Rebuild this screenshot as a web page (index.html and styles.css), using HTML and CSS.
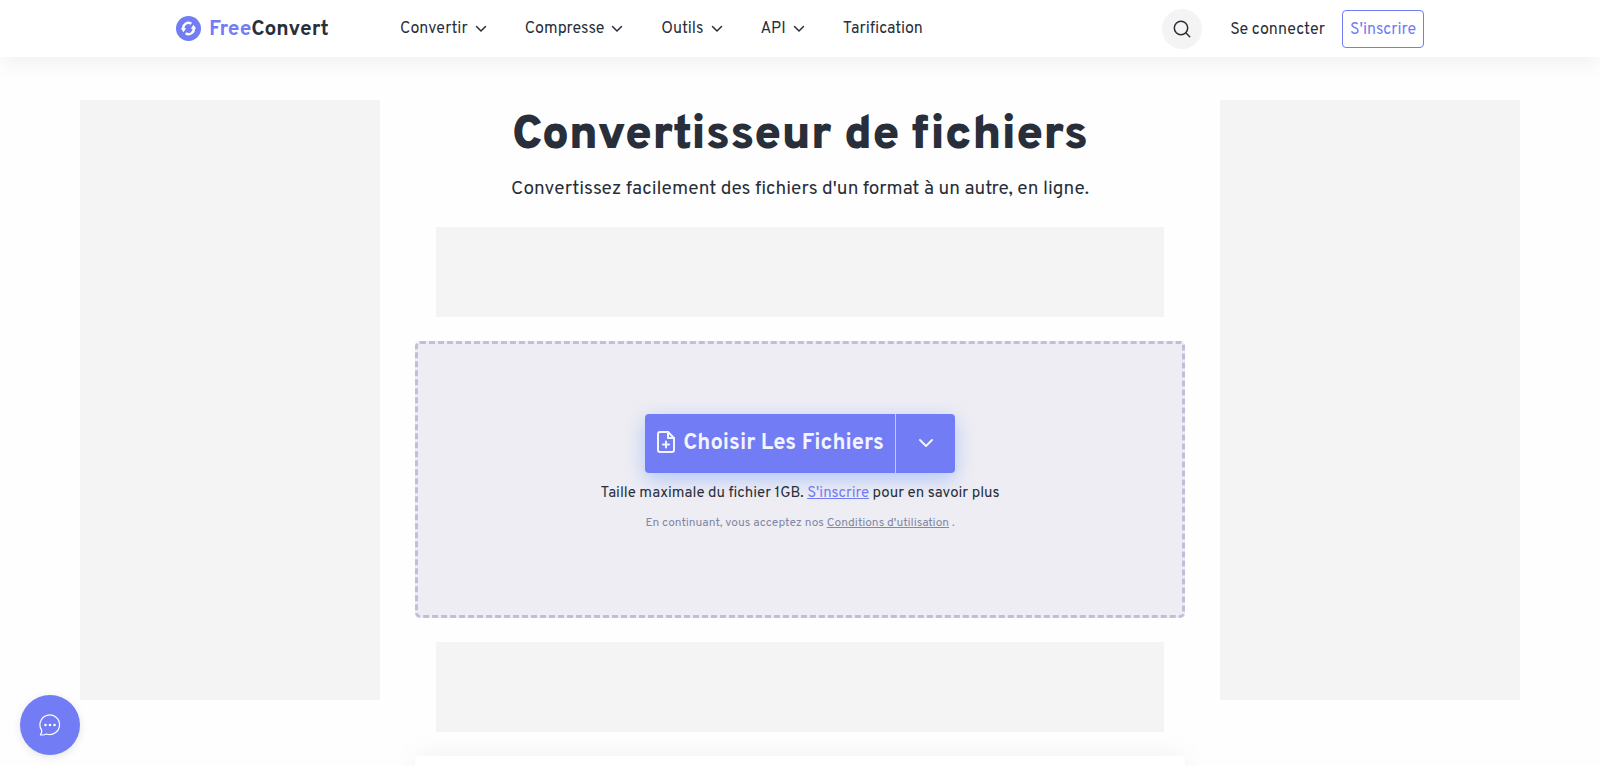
FILE: index.html
```html
<!DOCTYPE html>
<html lang="fr">
<head>
    <meta charset="UTF-8">
    <meta name="viewport" content="width=device-width, initial-scale=1.0">
    <title>FreeConvert - Convertisseur de fichiers</title>
    <link rel="stylesheet" href="styles.css">
</head>
<body>
    <header class="header">
        <div class="header-inner">
            <a href="#" class="logo">
                <svg class="logo-icon" viewBox="0 0 25 25">
                    <circle cx="12.5" cy="12.5" r="12.5" fill="#727cf5"/>
                    <g fill="none" stroke="#fff" stroke-width="2.400" stroke-linecap="butt">
                        <path d="M7.500 13.500A5.100 5.100 0 0 1 15.300 7.800"/>
                        <path d="M17.500 11.500A5.100 5.100 0 0 1 9.700 17.200"/>
                    </g>
                    <path d="M4.800 12.200H10.200L7.500 16.200zM20.200 12.800H14.800L17.500 8.800z" fill="#fff"/>
                </svg>
                <span class="logo-text"><span class="logo-free">Free</span>Convert</span>
            </a>

            <nav class="nav">
                <button class="nav-item">Convertir <svg class="chevron" viewBox="0 0 12 12"><path d="M1.500 3.500L6 8l4.500-4.500"/></svg></button>
                <button class="nav-item">Compresse <svg class="chevron" viewBox="0 0 12 12"><path d="M1.500 3.500L6 8l4.500-4.500"/></svg></button>
                <button class="nav-item">Outils <svg class="chevron" viewBox="0 0 12 12"><path d="M1.500 3.500L6 8l4.500-4.500"/></svg></button>
                <button class="nav-item">API <svg class="chevron" viewBox="0 0 12 12"><path d="M1.500 3.500L6 8l4.500-4.500"/></svg></button>
                <a href="#" class="nav-item">Tarification</a>
            </nav>

            <div class="account">
                <button class="search-btn" aria-label="Rechercher">
                    <svg viewBox="0 0 18 18"><circle cx="8" cy="8" r="6.700"/><path d="M12.800 12.800L16.700 16.700"/></svg>
                </button>
                <a href="#" class="login">Se connecter</a>
                <a href="#" class="signup">S'inscrire</a>
            </div>
        </div>
    </header>

    <main class="page">
        <aside class="ad-side"></aside>

        <section class="content">
            <h1>Convertisseur de fichiers</h1>
            <p class="subtitle">Convertissez facilement des fichiers d'un format à un autre, en ligne.</p>

            <div class="ad-banner"></div>

            <div class="dropzone">
                <div class="choose">
                    <button class="choose-btn">
                        <svg class="file-icon" viewBox="0 0 20 24">
                            <path d="M12 2H4a2 2 0 0 0-2 2v16a2 2 0 0 0 2 2h12a2 2 0 0 0 2-2V8z"/>
                            <path d="M12 2v6h6M10 11.500v6M7 14.500h6"/>
                        </svg>
                        <span class="choose-label">Choisir Les Fichiers</span>
                    </button>
                    <button class="choose-more" aria-label="Autres sources">
                        <svg viewBox="0 0 16 10"><path d="M2 2l6 6 6-6"/></svg>
                    </button>
                </div>
                <p class="max-size">Taille maximale du fichier 1GB. <a href="#">S'inscrire</a> pour en savoir plus</p>
                <p class="terms">En continuant, vous acceptez nos <a href="#">Conditions d'utilisation</a> .</p>
            </div>

            <div class="ad-banner"></div>

            <div class="card"></div>
        </section>

        <aside class="ad-side"></aside>
    </main>

    <button class="chat-btn" aria-label="Chat">
        <svg viewBox="0 0 22 22">
            <path d="M1.300 20.800C2.800 19 3 17.600 2.600 16.200A9.800 9.800 0 1 1 7.500 20C5.800 20.800 3.500 21.200 1.300 20.800z"/>
            <g class="dots"><circle cx="6.500" cy="11" r="1.300"/><circle cx="11" cy="11" r="1.300"/><circle cx="15.500" cy="11" r="1.300"/></g>
        </svg>
    </button>
</body>
</html>
```

FILE: styles.css
```css
* {
    margin: 0;
    padding: 0;
    box-sizing: border-box;
}

body {
    height: 100vh;
    overflow: hidden;
    font-family: Overpass, Roboto, sans-serif;
    font-size: 16px;
    line-height: 24px;
    color: #282f3b;
    background: #fefefe;
}

button {
    font: inherit;
    color: inherit;
    background: none;
    border: none;
    cursor: pointer;
}

a {
    color: inherit;
    text-decoration: none;
}

svg {
    fill: none;
    stroke: currentColor;
    stroke-linecap: round;
    stroke-linejoin: round;
}

/* Header */
.header {
    position: relative;
    background: #fff;
    box-shadow: 0 10px 20px -2px rgba(0, 0, 0, 0.05);
}

.header-inner {
    display: flex;
    align-items: center;
    max-width: 1248px;
    height: 57px;
    margin: 0 auto;
}

.logo {
    display: flex;
    align-items: center;
    gap: 8px;
    width: 224px;
}

.logo-icon {
    width: 25px;
    height: 25px;
    stroke: none;
}

.logo-text {
    padding-top: 2px;
    font-size: 21px;
    font-weight: 700;
}

.logo-free {
    color: #727cf5;
}

.nav {
    display: flex;
    gap: 38px;
}

.nav-item {
    display: flex;
    align-items: center;
    gap: 7px;
}

.chevron {
    width: 12px;
    height: 12px;
    stroke-width: 1.5;
}

.account {
    display: flex;
    align-items: center;
    margin-left: auto;
}

.search-btn {
    display: flex;
    align-items: center;
    justify-content: center;
    width: 40px;
    height: 40px;
    margin-right: 28px;
    border-radius: 50%;
    background: #f4f4f4;
}

.search-btn svg {
    width: 18px;
    height: 18px;
    stroke-width: 1.5;
}

.login {
    padding-top: 2px;
    margin-right: 17px;
}

.signup {
    padding: 7px 7px 5px;
    border: 1px solid #727cf5;
    border-radius: 4px;
    color: #727cf5;
}

/* Page */
.page {
    display: flex;
    justify-content: space-between;
    max-width: 1440px;
    margin: 43px auto 0;
}

.ad-side {
    width: 300px;
    height: 600px;
    background: #f4f4f4;
}

.content {
    display: flex;
    flex-direction: column;
    align-items: center;
    width: 770px;
}

h1 {
    padding-top: 4px;
    font-size: 48px;
    font-weight: 900;
    line-height: 64px;
}

.subtitle {
    margin: 6px 0 22px;
    font-size: 19px;
    line-height: 31px;
}

.ad-banner {
    width: 728px;
    height: 90px;
    background: #f4f4f4;
}

.dropzone {
    display: flex;
    flex-direction: column;
    align-items: center;
    width: 100%;
    margin: 24px 0;
    padding: 70px 0 83px;
    border: 3px dashed #c0bfda;
    border-radius: 5px;
    background: #eeedf3;
}

.choose {
    display: flex;
    width: 310px;
    height: 59px;
    border-radius: 4px;
    color: #f4f4ff;
    background: #727cf5;
    box-shadow: 0 6px 20px rgba(80, 140, 255, 0.4);
}

.choose-btn {
    display: flex;
    flex: 1;
    align-items: center;
    justify-content: center;
    gap: 7px;
    padding-bottom: 4px;
    font-size: 22px;
    font-weight: 700;
}

.choose-label {
    padding-top: 4px;
}

.file-icon {
    width: 20px;
    height: 24px;
    stroke-width: 2;
}

.choose-more {
    width: 60px;
    border-left: 1px solid #c3c7fb;
}

.choose-more svg {
    width: 16px;
    height: 10px;
    stroke-width: 2;
}

.max-size {
    margin-top: 9px;
    font-size: 15px;
}

.max-size a {
    color: #727cf5;
    text-decoration: underline;
}

.terms {
    margin-top: 8px;
    font-size: 12px;
    line-height: 18px;
    color: #8089a6;
}

.terms a {
    text-decoration: underline;
}

.card {
    width: 100%;
    height: 200px;
    margin-top: 24px;
    border-radius: 4px;
    background: #fff;
    box-shadow: 0 0 30px rgba(0, 0, 0, 0.06);
}

/* Chat */
.chat-btn {
    position: fixed;
    left: 20px;
    bottom: 10px;
    display: flex;
    align-items: center;
    justify-content: center;
    width: 60px;
    height: 60px;
    border-radius: 50%;
    color: #fff;
    background: #727cf5;
    box-shadow: 0 2px 8px rgba(0, 0, 0, 0.1);
}

.chat-btn svg {
    width: 22px;
    height: 22px;
    stroke-width: 1.2;
}

.dots {
    fill: #fff;
    stroke: none;
}
```
